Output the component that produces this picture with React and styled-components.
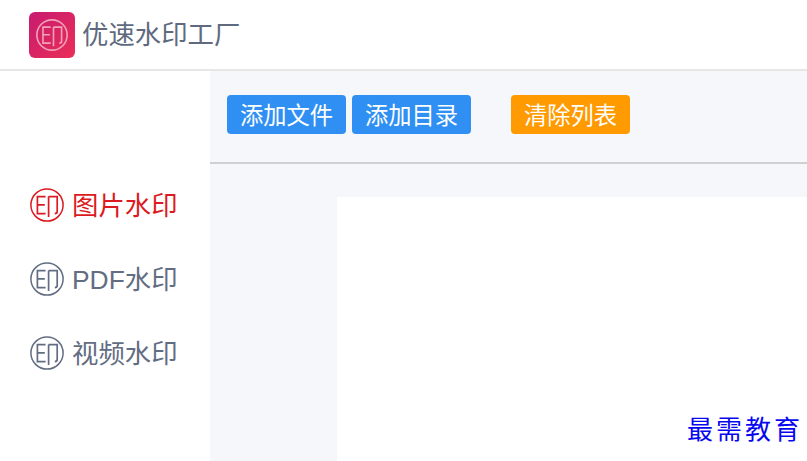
import styled, { createGlobalStyle } from "styled-components";

const GlobalStyle = createGlobalStyle`
    html, body {
        margin: 0;
        padding: 0;
        height: 100%;
        background: #fff;
        overflow: hidden;
    }
    #root {
        height: 100%;
    }
`;

const SealIcon = ({ size = 34, light }) => (
    <Seal $light={light} width={size} height={size} viewBox="0 0 34 34" fill="none">
        <circle cx="17" cy="17" r="16.1" strokeWidth={light ? 1.7 : 1.5} />
        <path d="M15.6 8.6H7.4V25.6H15.6M7.4 16.8H14.8" strokeWidth="1.7" />
        <path d="M18.6 8.6H27.2V23.6C27.2 25 26.4 25.6 24.8 25.6M18.6 8.6V29" strokeWidth="1.7" />
    </Seal>
);

const App = () => {
    return (
        <Page>
            <GlobalStyle />
            <Header>
                <Logo>
                    <SealIcon size={32} light />
                </Logo>
                <Title>优速水印工厂</Title>
            </Header>
            <Body>
                <Sidebar>
                    <NavItem $active>
                        <SealIcon />
                        <NavLabel>图片水印</NavLabel>
                    </NavItem>
                    <NavItem>
                        <SealIcon />
                        <NavLabel>PDF水印</NavLabel>
                    </NavItem>
                    <NavItem>
                        <SealIcon />
                        <NavLabel>视频水印</NavLabel>
                    </NavItem>
                </Sidebar>
                <Main>
                    <Toolbar>
                        <Button>添加文件</Button>
                        <Button>添加目录</Button>
                        <ClearButton>清除列表</ClearButton>
                    </Toolbar>
                    <Content>
                        <Canvas />
                    </Content>
                </Main>
            </Body>
            <Watermark>最需教育</Watermark>
        </Page>
    );
};

const Page = styled.div`
    position: relative;
    display: flex;
    flex-direction: column;
    height: 100vh;
    overflow: hidden;
    font-family: "Liberation Sans", "Noto Sans CJK SC", sans-serif;
`;

const Header = styled.header`
    display: flex;
    align-items: center;
    gap: 8px;
    flex: none;
    box-sizing: border-box;
    height: 71px;
    padding: 1px 0 0 29px;
    border-bottom: 2px solid #e6e6e6;
`;

const Logo = styled.div`
    display: flex;
    align-items: center;
    justify-content: center;
    width: 46px;
    height: 46px;
    border-radius: 6px;
    background: linear-gradient(135deg, #c81b70, #ea2e58);
`;

const Seal = styled.svg`
    flex: none;
    stroke: ${(props) => (props.$light ? "#f2a3b8" : "currentColor")};
`;

const Title = styled.h1`
    margin: 0 0 6px -1px;
    font-size: 26.4px;
    font-weight: 400;
    color: #606a7e;
`;

const Body = styled.div`
    display: flex;
    flex: 1;
    min-height: 0;
`;

const Sidebar = styled.nav`
    display: flex;
    flex-direction: column;
    gap: 37px;
    width: 210px;
    flex: none;
    box-sizing: border-box;
    padding: 115px 0 0 30px;
`;

const NavItem = styled.div`
    display: flex;
    align-items: center;
    gap: 8px;
    height: 37px;
    font-size: 26.4px;
    color: ${(props) => (props.$active ? "#dc1a22" : "#626c82")};
`;

const NavLabel = styled.span`
    margin-bottom: 3px;
`;

const Main = styled.main`
    display: flex;
    flex-direction: column;
    flex: 1;
    min-width: 0;
    background: #f5f7fa;
`;

const Toolbar = styled.div`
    display: flex;
    align-items: flex-start;
    gap: 6px;
    flex: none;
    box-sizing: border-box;
    height: 93px;
    padding: 24px 0 0 17px;
    border-bottom: 2px solid #cfd0d2;
`;

const Button = styled.button`
    width: 119px;
    height: 39px;
    padding: 3px 0 0;
    border: 0;
    border-radius: 4px;
    background: #308ff2;
    color: #fff;
    font-family: inherit;
    font-size: 23.3px;
    line-height: 36px;
`;

const ClearButton = styled(Button)`
    margin-left: 34px;
    background: #ff9a00;
`;

const Content = styled.div`
    display: flex;
    flex: 1;
    min-height: 0;
    padding: 33px 0 0 127px;
`;

const Canvas = styled.div`
    flex: 1;
    background: #fff;
`;

const Watermark = styled.div`
    position: absolute;
    right: 4px;
    bottom: 16px;
    font-family: "Noto Sans CJK SC", serif;
    font-size: 26px;
    line-height: 34px;
    letter-spacing: 3px;
    color: #0808f0;
`;

export default App;
